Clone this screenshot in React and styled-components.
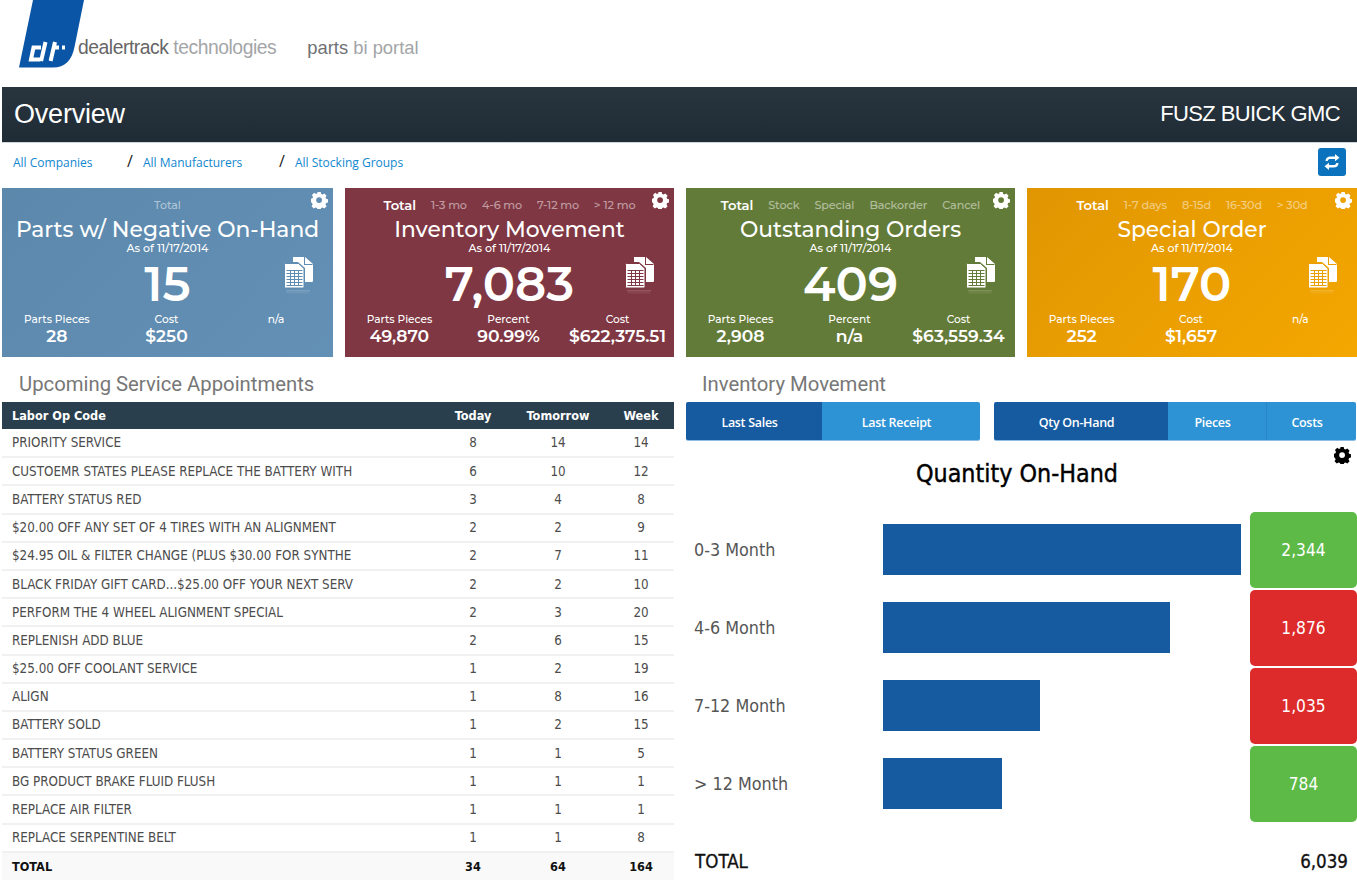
import styled, { createGlobalStyle } from "styled-components"

const GlobalStyle = createGlobalStyle`
  html, body {
    margin: 0;
    padding: 0;
    background: #fff;
  }
  * {
    box-sizing: border-box;
  }
`

const cardFont = `"Montserrat", "DejaVu Sans", sans-serif`
const tableFont = `"DejaVu Sans", Verdana, sans-serif`

const Page = styled.div`
  width: 1357px;
  height: 883px;
  overflow: hidden;
  padding-left: 2px;
  font-family: "Liberation Sans", Arial, sans-serif;
`

const LogoBar = styled.div`
  height: 87px;
  display: flex;
  align-items: flex-start;
  padding-left: 17px;
`

const BrandName = styled.span`
  margin: 38px 0 0 -11px;
  font-size: 19.3px;
  line-height: 20px;
  letter-spacing: -0.45px;
  color: #666;
`

const BrandLight = styled.span`
  color: #a3a5a8;
`

const PortalName = styled.span`
  margin: 38px 0 0 31px;
  font-size: 18.4px;
  line-height: 20px;
  color: #a3a5a8;

  b {
    font-weight: 400;
    color: #6f7174;
  }
`

const HeaderBar = styled.header`
  height: 56px;
  display: flex;
  align-items: center;
  justify-content: space-between;
  padding: 0 17px 0 12px;
  background: linear-gradient(#28353f, #1f2b35);
  color: #fff;
  border-bottom: 1px solid #cfd6da;
`

const PageTitle = styled.h1`
  margin: 0;
  font-size: 27px;
  font-weight: 400;
  letter-spacing: -0.2px;
`

const StoreName = styled.div`
  font-size: 22px;
  letter-spacing: -0.6px;
  margin-top: -1px;
`

const Crumbs = styled.nav`
  height: 45px;
  display: flex;
  align-items: center;
  padding: 0 11px 7px;
  font-family: "Open Sans", sans-serif;
  font-size: 12px;
`

const Crumb = styled.a`
  color: #0f87cf;
  width: ${(p) => p.$width}px;
`

const Slash = styled.span`
  width: 16px;
  font-size: 16px;
  color: #222;
  margin-top: -3px;
`

const RefreshButton = styled.button`
  margin-left: auto;
  width: 28px;
  height: 28px;
  padding: 0;
  border: 0;
  border-radius: 3px;
  background: #0b72bd;
  display: flex;
  align-items: center;
  justify-content: center;
`

const CardRow = styled.section`
  display: grid;
  grid-template-columns: 331px 329px 329px 330px;
  column-gap: 12px;
`

const Card = styled.article`
  position: relative;
  height: 169px;
  padding-top: 10px;
  background: ${(p) => p.$bg};
  color: #fff;
  font-family: ${cardFont};
  font-weight: 500;
  text-align: center;
`

const CardTabs = styled.div`
  height: 14px;
  display: flex;
  justify-content: center;
  align-items: center;
  gap: 15px;
`

const CardTab = styled.span`
  opacity: ${(p) => (p.$active ? 1 : 0.5)};
  font-size: ${(p) => (p.$active ? 13.2 : 11.2)}px;
  font-weight: ${(p) => (p.$active ? 600 : 500)};
  letter-spacing: -0.1px;
`

const LoneTab = styled.span`
  opacity: 0.5;
  font-size: 11px;
`

const CardTitle = styled.h2`
  margin: 4px 0 0;
  font-size: 21.8px;
  line-height: 26px;
  font-weight: 500;
  white-space: nowrap;
`

const AsOf = styled.div`
  font-size: 11px;
  line-height: 11px;
  margin-top: 1px;
`

const BigNumber = styled.div`
  font-size: 48px;
  font-weight: 600;
  line-height: 48px;
  margin-top: 6px;
`

const Stats = styled.div`
  display: grid;
  grid-template-columns: repeat(3, 1fr);
  margin-top: 6px;
  padding-right: 2px;
`

const Stat = styled.div`
  min-width: 0;
`

const StatLabel = styled.div`
  font-size: 10.6px;
  line-height: 12px;
`

const StatValue = styled.div`
  font-size: 17.2px;
  font-weight: 600;
  line-height: 19px;
  white-space: nowrap;
`

const GearSpot = styled.span`
  position: absolute;
  top: ${(p) => p.$top}px;
  right: ${(p) => p.$right}px;
  line-height: 0;
`

const SheetSpot = styled.span`
  position: absolute;
  top: 69px;
  right: 19px;
  line-height: 0;
  color: ${(p) => p.$tone};
`

const Columns = styled.main`
  display: grid;
  grid-template-columns: 672px 671px;
  column-gap: 12px;
`

const SectionTitle = styled.h3`
  margin: 0;
  height: 45px;
  padding: 15px 0 0 ${(p) => p.$indent}px;
  font-family: Roboto, sans-serif;
  font-size: 20.3px;
  line-height: 24px;
  font-weight: 400;
  color: #777;
`

const Table = styled.table`
  width: 100%;
  border-collapse: collapse;
  table-layout: fixed;
  font-family: ${tableFont};
  font-stretch: condensed;
  font-size: 13.3px;
  color: #4c4c4c;
`

const HeadCell = styled.th`
  height: 27px;
  padding: 0 0 0 ${(p) => (p.$first ? 10 : 0)}px;
  background: #2a3f4e;
  color: #fff;
  font-size: 12.6px;
  font-weight: 700;
  text-align: ${(p) => (p.$first ? "left" : "center")};
`

const Row = styled.tr`
  height: 28.2px;
  border-bottom: 2px solid #eff1f2;
`

const LabelCell = styled.td`
  padding: 0 0 0 10px;
  white-space: nowrap;
  overflow: hidden;
`

const NumCell = styled.td`
  padding: 0;
  text-align: center;
`

const TotalRow = styled.tr`
  height: 28px;
  background: #f9f9f9;
  color: #111;
  font-size: 12.6px;
  font-weight: 700;
`

const TabRow = styled.div`
  display: flex;
  gap: 14px;
  height: 39px;
`

const TabGroup = styled.div`
  display: flex;
  width: ${(p) => p.$width}px;
  border-radius: 2px;
  overflow: hidden;
  border-bottom: 1px solid #8dbde2;
`

const TabButton = styled.button`
  width: ${(p) => p.$width}px;
  padding: 2px 9px 0 0;
  border: 0;
  border-left: ${(p) => (p.$divide ? "1px solid #2a85c6" : "0")};
  background: ${(p) => (p.$active ? "#165a9f" : "#2e93d4")};
  color: #fff;
  font-family: "Open Sans", sans-serif;
  font-size: 12.5px;
  font-weight: 600;
  letter-spacing: -0.3px;
`

const ChartPanel = styled.div`
  position: relative;
  padding-top: 17px;
  font-family: ${tableFont};
  font-stretch: condensed;
`

const ChartTitle = styled.h4`
  margin: 0;
  height: 54px;
  padding-right: 9px;
  font-size: 24.8px;
  line-height: 32px;
  font-weight: 400;
  color: #000;
  text-align: center;
  -webkit-text-stroke: 0.4px #000;
`

const ChartGrid = styled.div`
  display: flex;
  flex-direction: column;
  gap: 2px;
`

const ChartRow = styled.div`
  display: grid;
  grid-template-columns: 197px 367px 107px;
  height: 76px;
  align-items: center;
`

const ChartLabel = styled.div`
  padding: 0 0 2px 8px;
  font-size: 17.8px;
  color: #555;
`

const BarTrack = styled.div`
  padding-bottom: 2px;
`

const Bar = styled.div`
  height: 51px;
  background: #165a9f;
`

const ValueTile = styled.div`
  height: 76px;
  border-radius: 5px;
  background: ${(p) => (p.$good ? "#5dba47" : "#dd2a2a")};
  color: #fff;
  font-size: 17.2px;
  display: flex;
  align-items: center;
  justify-content: center;
`

const ChartTotal = styled.div`
  display: flex;
  justify-content: space-between;
  padding: 27px 9px 0 9px;
  font-size: 18.6px;
  line-height: 26px;
  color: #111;
  -webkit-text-stroke: 0.3px #111;
`

function Gear({ color = "#fff", size = 17 }) {
  return (
    <svg width={size} height={size} viewBox="0 0 20 20">
      <path
        fillRule="evenodd"
        fill={color}
        d="M8 .5h4l.6 2.5 1.7.7 2.2-1.3 2.8 2.8-1.3 2.2.7 1.7 2.3.6v4l-2.3.6-.7 1.7 1.3 2.2-2.8 2.8-2.2-1.3-1.7.7-.6 2.1H8l-.6-2.1-1.7-.7-2.2 1.3-2.8-2.8 1.3-2.2-.7-1.7L-.5 13V9l2.3-.6.7-1.7L1.2 4.5 4 1.7l2.2 1.3 1.7-.7zM10 7a3.6 3.6 0 1 0 0 7.2A3.6 3.6 0 0 0 10 7z"
        transform="translate(0 -.6) scale(.95)"
      />
    </svg>
  )
}

function Sheets() {
  return (
    <svg width="30" height="40" viewBox="0 0 30 40">
      <path fill="#fff" d="M9 0h12l8 7v17a1 1 0 0 1-1 1h-7V11l-7-6H9z" />
      <path fill="currentColor" d="M21 0v7h8l-1 .9h-8V0z" />
      <path
        fill="#fff"
        stroke="currentColor"
        strokeWidth="1"
        d="M1.500 6.500h13l5.500 5V30a1 1 0 0 1-1 1H1.500a1 1 0 0 1-1-1V7.500a1 1 0 0 1 1-1z"
      />
      <path
        stroke="currentColor"
        strokeWidth="1"
        fill="none"
        d="M2.500 13.500h16M2.500 16.500h16M2.500 19.500h16M2.500 22.500h16M2.500 25.500h16M2.500 28.500h16M6.500 13v16M10.500 13v16M14.500 13v16"
      />
      <rect x="2" y="33" width="24" height="1.500" fill="#fff" opacity=".16" />
      <rect x="3" y="35" width="22" height="1.500" fill="#fff" opacity=".08" />
    </svg>
  )
}

const cards = [
  {
    bg: "linear-gradient(135deg, #5b88ab, #6390b5)",
    tone: "#5f8cb0",
    tabs: null,
    title: "Parts w/ Negative On-Hand",
    big: "15",
    stats: [["Parts Pieces", "28"], ["Cost", "$250"], ["n/a", ""]],
  },
  {
    bg: "#7f3743",
    tone: "#7f3743",
    tabs: ["1-3 mo", "4-6 mo", "7-12 mo", "> 12 mo"],
    title: "Inventory Movement",
    big: "7,083",
    stats: [["Parts Pieces", "49,870"], ["Percent", "90.99%"], ["Cost", "$622,375.51"]],
  },
  {
    bg: "#637b38",
    tone: "#637b38",
    tabs: ["Stock", "Special", "Backorder", "Cancel"],
    title: "Outstanding Orders",
    big: "409",
    stats: [["Parts Pieces", "2,908"], ["Percent", "n/a"], ["Cost", "$63,559.34"]],
  },
  {
    bg: "linear-gradient(135deg, #e09602, #f4a700)",
    tone: "#ea9f02",
    tabs: ["1-7 days", "8-15d", "16-30d", "> 30d"],
    title: "Special Order",
    big: "170",
    stats: [["Parts Pieces", "252"], ["Cost", "$1,657"], ["n/a", ""]],
  },
]

const appointments = [
  ["PRIORITY SERVICE", 8, 14, 14],
  ["CUSTOEMR STATES PLEASE REPLACE THE BATTERY WITH", 6, 10, 12],
  ["BATTERY STATUS RED", 3, 4, 8],
  ["$20.00 OFF ANY SET OF 4 TIRES WITH AN ALIGNMENT", 2, 2, 9],
  ["$24.95 OIL & FILTER CHANGE (PLUS $30.00 FOR SYNTHE", 2, 7, 11],
  ["BLACK FRIDAY GIFT CARD...$25.00 OFF YOUR NEXT SERV", 2, 2, 10],
  ["PERFORM THE 4 WHEEL ALIGNMENT SPECIAL", 2, 3, 20],
  ["REPLENISH ADD BLUE", 2, 6, 15],
  ["$25.00 OFF COOLANT SERVICE", 1, 2, 19],
  ["ALIGN", 1, 8, 16],
  ["BATTERY SOLD", 1, 2, 15],
  ["BATTERY STATUS GREEN", 1, 1, 5],
  ["BG PRODUCT BRAKE FLUID FLUSH", 1, 1, 1],
  ["REPLACE AIR FILTER", 1, 1, 1],
  ["REPLACE SERPENTINE BELT", 1, 1, 8],
]

const quantities = [
  { label: "0-3 Month", width: 358, value: "2,344", good: true },
  { label: "4-6 Month", width: 287, value: "1,876", good: false },
  { label: "7-12 Month", width: 157, value: "1,035", good: false },
  { label: "> 12 Month", width: 119, value: "784", good: true },
]

function DashCard({ card }) {
  return (
    <Card $bg={card.bg}>
      <CardTabs>
        {card.tabs ? (
          <>
            <CardTab $active>Total</CardTab>
            {card.tabs.map((t) => (
              <CardTab key={t}>{t}</CardTab>
            ))}
          </>
        ) : (
          <LoneTab>Total</LoneTab>
        )}
      </CardTabs>
      <CardTitle>{card.title}</CardTitle>
      <AsOf>As of 11/17/2014</AsOf>
      <BigNumber>{card.big}</BigNumber>
      <Stats>
        {card.stats.map(([label, value]) => (
          <Stat key={label}>
            <StatLabel>{label}</StatLabel>
            <StatValue>{value}</StatValue>
          </Stat>
        ))}
      </Stats>
      <GearSpot $top={4} $right={5}>
        <Gear />
      </GearSpot>
      <SheetSpot $tone={card.tone}>
        <Sheets />
      </SheetSpot>
    </Card>
  )
}

export default function App() {
  return (
    <Page>
      <GlobalStyle />
      <LogoBar>
        <svg width="70" height="68" viewBox="0 0 70 68">
          <path
            fill="#0a55a5"
            d="M14 0h51l-9.500 47C53 60 46 67.500 34 67.500H0z"
          />
          <path
            fill="none"
            stroke="#fff"
            strokeWidth="4"
            d="M22 47.500h-7.500L12 59.500h9.500M26.500 42l-4.400 19M36 42l-4.400 19M34 47.500h6M43 47.500h3"
          />
        </svg>
        <BrandName>
          dealertrack <BrandLight>technologies</BrandLight>
        </BrandName>
        <PortalName>
          <b>parts</b> bi portal
        </PortalName>
      </LogoBar>

      <HeaderBar>
        <PageTitle>Overview</PageTitle>
        <StoreName>FUSZ BUICK GMC</StoreName>
      </HeaderBar>

      <Crumbs>
        <Crumb $width={114}>All Companies</Crumb>
        <Slash>/</Slash>
        <Crumb $width={136}>All Manufacturers</Crumb>
        <Slash>/</Slash>
        <Crumb $width={130}>All Stocking Groups</Crumb>
        <RefreshButton aria-label="Refresh">
          <svg width="18" height="18" viewBox="0 0 18 18">
            <path
              fill="#fff"
              d="M2.500 8C2.500 5 4.500 3.500 7.500 3.500H12V1l4.500 3.700L12 8.300V6H7.500C6 6 5 6.500 4.700 8zM15.500 10c0 3-2 4.500-5 4.500H6V17l-4.500-3.700L6 9.700V12h4.500c1.500 0 2.500-.5 2.800-2z"
            />
          </svg>
        </RefreshButton>
      </Crumbs>

      <CardRow>
        {cards.map((card) => (
          <DashCard key={card.title} card={card} />
        ))}
      </CardRow>

      <Columns>
        <div>
          <SectionTitle $indent={17}>Upcoming Service Appointments</SectionTitle>
          <Table>
            <colgroup>
              <col />
              <col width="70" />
              <col width="100" />
              <col width="66" />
            </colgroup>
            <thead>
              <tr>
                <HeadCell $first>Labor Op Code</HeadCell>
                <HeadCell>Today</HeadCell>
                <HeadCell>Tomorrow</HeadCell>
                <HeadCell>Week</HeadCell>
              </tr>
            </thead>
            <tbody>
              {appointments.map(([label, today, tomorrow, week]) => (
                <Row key={label}>
                  <LabelCell>{label}</LabelCell>
                  <NumCell>{today}</NumCell>
                  <NumCell>{tomorrow}</NumCell>
                  <NumCell>{week}</NumCell>
                </Row>
              ))}
              <TotalRow>
                <LabelCell>TOTAL</LabelCell>
                <NumCell>34</NumCell>
                <NumCell>64</NumCell>
                <NumCell>164</NumCell>
              </TotalRow>
            </tbody>
          </Table>
        </div>

        <div>
          <SectionTitle $indent={16}>Inventory Movement</SectionTitle>
          <TabRow>
            <TabGroup $width={294}>
              <TabButton $width={136} $active>Last Sales</TabButton>
              <TabButton $width={158}>Last Receipt</TabButton>
            </TabGroup>
            <TabGroup $width={362}>
              <TabButton $width={174} $active>Qty On-Hand</TabButton>
              <TabButton $width={98}>Pieces</TabButton>
              <TabButton $width={90} $divide>Costs</TabButton>
            </TabGroup>
          </TabRow>
          <ChartPanel>
            <GearSpot $top={6} $right={6}>
              <Gear color="#000" size={17} />
            </GearSpot>
            <ChartTitle>Quantity On-Hand</ChartTitle>
            <ChartGrid>
              {quantities.map((q) => (
                <ChartRow key={q.label}>
                  <ChartLabel>{q.label}</ChartLabel>
                  <BarTrack>
                    <Bar style={{ width: q.width }} />
                  </BarTrack>
                  <ValueTile $good={q.good}>{q.value}</ValueTile>
                </ChartRow>
              ))}
            </ChartGrid>
            <ChartTotal>
              <span>TOTAL</span>
              <span>6,039</span>
            </ChartTotal>
          </ChartPanel>
        </div>
      </Columns>
    </Page>
  )
}
